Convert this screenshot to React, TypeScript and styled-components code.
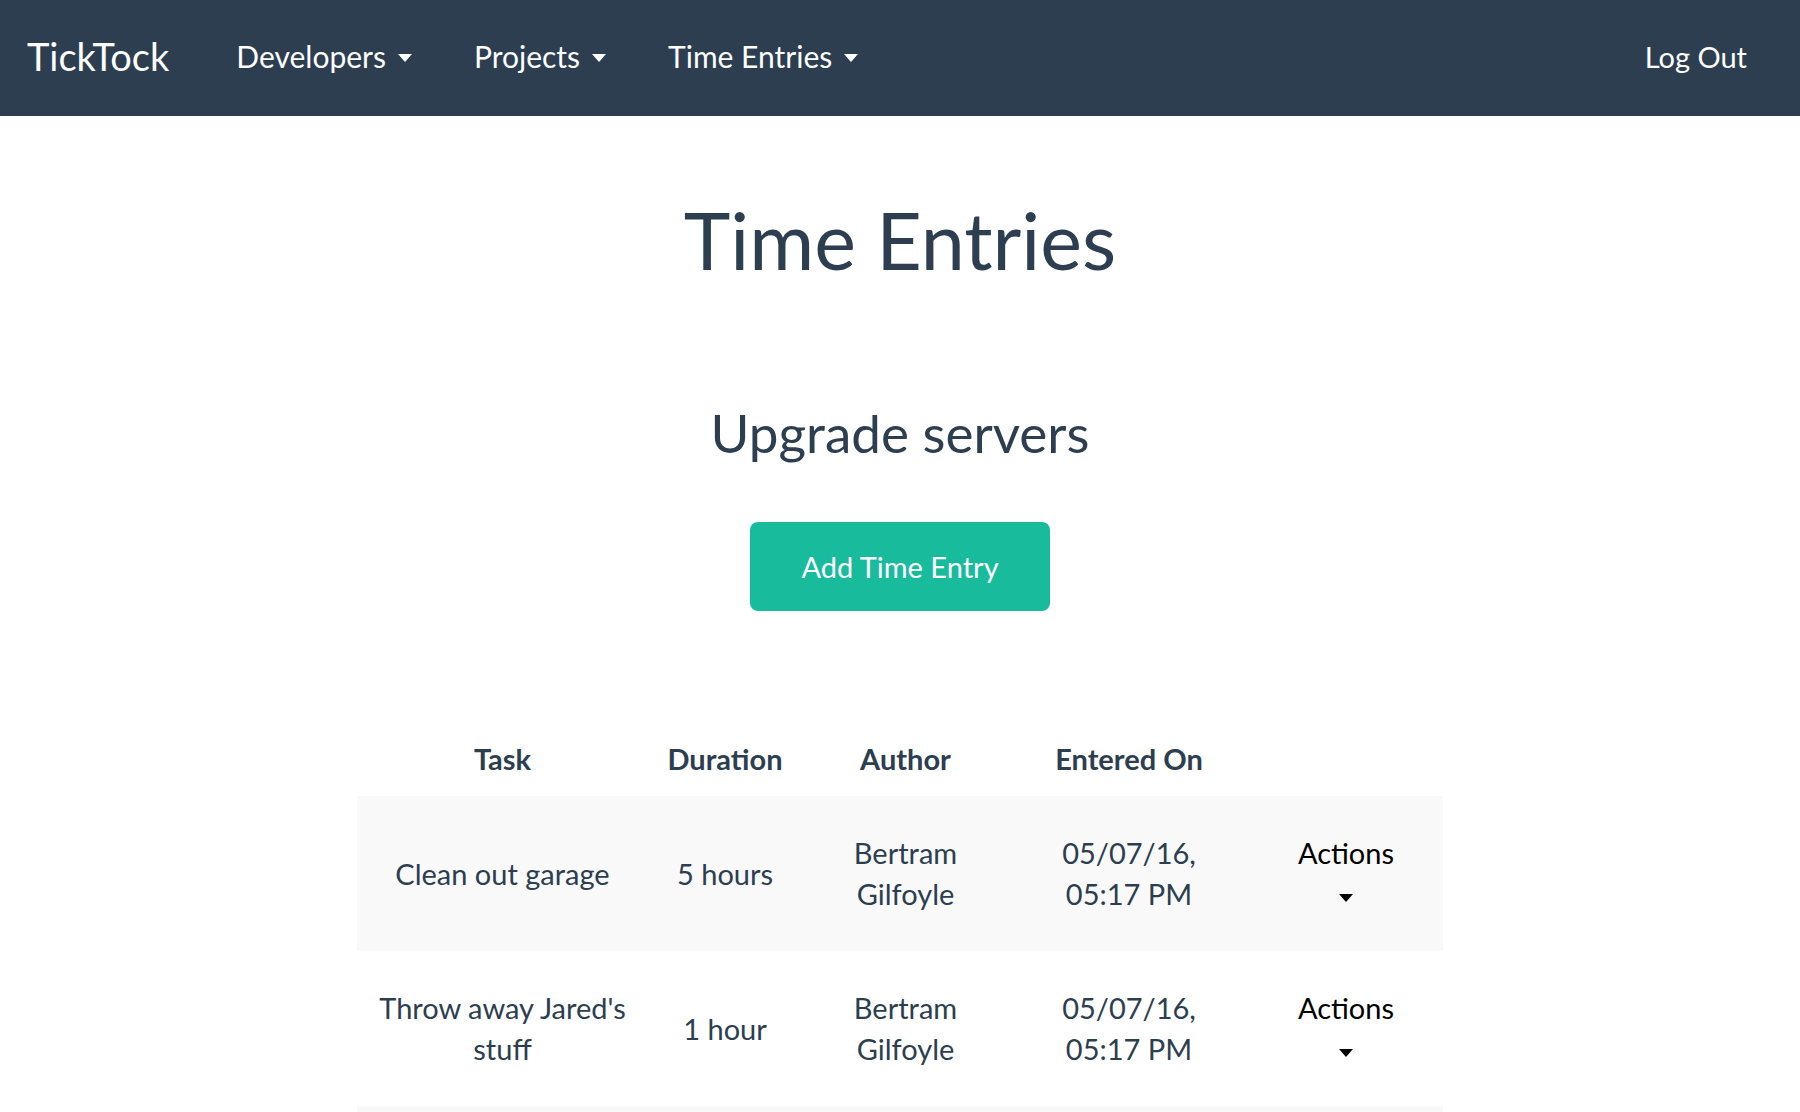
import React from "react";
import styled, { createGlobalStyle } from "styled-components";

const GlobalStyle = createGlobalStyle`
  html, body {
    margin: 0;
    padding: 0;
    background: #fff;
  }
  body {
    font-family: Lato, "Open Sans", "Liberation Sans", sans-serif;
    font-size: 29px;
    line-height: 41px;
    color: #2c3e50;
  }
  * {
    box-sizing: border-box;
  }
`;

const NavBar = styled.nav`
  height: 116px;
  background: #2c3e50;
  display: flex;
  align-items: center;
  padding: 0 53px 4px 27px;
`;

const Brand = styled.a`
  font-size: 38px;
  line-height: 41px;
  color: #fff;
  text-decoration: none;
  margin-right: 67px;
`;

const NavList = styled.ul`
  display: flex;
  list-style: none;
  margin: 0;
  padding: 0;
  gap: 62px;
`;

const NavLink = styled.a`
  display: flex;
  align-items: center;
  gap: 12px;
  color: #fff;
  text-decoration: none;
  font-size: 30px;
`;

const Caret = styled.span<{ color?: string }>`
  display: inline-block;
  width: 0;
  height: 0;
  margin-top: 3px;
  border-top: 8px solid ${({ color }) => color || "#fff"};
  border-left: 7.5px solid transparent;
  border-right: 7.5px solid transparent;
`;

const LogOut = styled.a`
  margin-left: auto;
  color: #fff;
  text-decoration: none;
  font-size: 29px;
`;

const Main = styled.main`
  display: flex;
  flex-direction: column;
  align-items: center;
`;

const Title = styled.h1`
  font-size: 79px;
  line-height: 87px;
  font-weight: 400;
  margin: 80px 0 0;
`;

const SubTitle = styled.h2`
  font-size: 53px;
  line-height: 64px;
  font-weight: 400;
  margin: 118px 0 0;
`;

const AddButton = styled.button`
  margin-top: 57px;
  width: 300px;
  height: 89px;
  border: none;
  border-radius: 8px;
  background: #18bc9c;
  color: #fff;
  font-family: inherit;
  font-size: 29px;
  cursor: pointer;
`;

const Table = styled.table`
  margin-top: 110px;
  width: 1086px;
  border-collapse: collapse;
  table-layout: fixed;
`;

const HeadCell = styled.th`
  font-weight: 700;
  text-align: center;
  padding: 17px 10px;
`;

const Row = styled.tr<{ striped?: boolean }>`
  background: ${({ striped }) => (striped ? "#f9f9f9" : "#fff")};
`;

const Cell = styled.td<{ inset?: number }>`
  text-align: center;
  vertical-align: middle;
  padding: 36px ${({ inset }) => inset ?? 10}px 37px;
`;

const ActionsToggle = styled.button`
  background: none;
  border: none;
  padding: 0;
  font-family: inherit;
  font-size: 29px;
  line-height: 41px;
  color: #000;
  display: inline-flex;
  flex-direction: column;
  align-items: center;
  cursor: pointer;
`;

const CaretLine = styled.span`
  height: 41px;
  padding-top: 6px;
  display: flex;
  align-items: center;
`;

const entries = [
  { task: "Clean out garage", duration: "5 hours", author: "Bertram Gilfoyle", on: "05/07/16, 05:17 PM" },
  { task: "Throw away Jared's stuff", duration: "1 hour", author: "Bertram Gilfoyle", on: "05/07/16, 05:17 PM" },
  { task: "Reboot the rack", duration: "2 hours", author: "Bertram Gilfoyle", on: "05/07/16, 05:17 PM" },
];

const colWidths = [291, 154, 207, 240, 194];

function App() {
  return (
    <>
      <GlobalStyle />
      <NavBar>
        <Brand href="#">TickTock</Brand>
        <NavList>
          {["Developers", "Projects", "Time Entries"].map((item) => (
            <li key={item}>
              <NavLink href="#">
                {item}
                <Caret />
              </NavLink>
            </li>
          ))}
        </NavList>
        <LogOut href="#">Log Out</LogOut>
      </NavBar>
      <Main>
        <Title>Time Entries</Title>
        <SubTitle>Upgrade servers</SubTitle>
        <AddButton>Add Time Entry</AddButton>
        <Table>
          <colgroup>
            {colWidths.map((w, i) => (
              <col key={i} style={{ width: w }} />
            ))}
          </colgroup>
          <thead>
            <tr>
              <HeadCell>Task</HeadCell>
              <HeadCell>Duration</HeadCell>
              <HeadCell>Author</HeadCell>
              <HeadCell>Entered On</HeadCell>
              <HeadCell />
            </tr>
          </thead>
          <tbody>
            {entries.map((e, i) => (
              <Row key={i} striped={i % 2 === 0}>
                <Cell>{e.task}</Cell>
                <Cell>{e.duration}</Cell>
                <Cell>{e.author}</Cell>
                <Cell inset={22}>{e.on}</Cell>
                <Cell>
                  <ActionsToggle>
                    Actions
                    <CaretLine>
                      <Caret color="#000" />
                    </CaretLine>
                  </ActionsToggle>
                </Cell>
              </Row>
            ))}
          </tbody>
        </Table>
      </Main>
    </>
  );
}

export default App;
